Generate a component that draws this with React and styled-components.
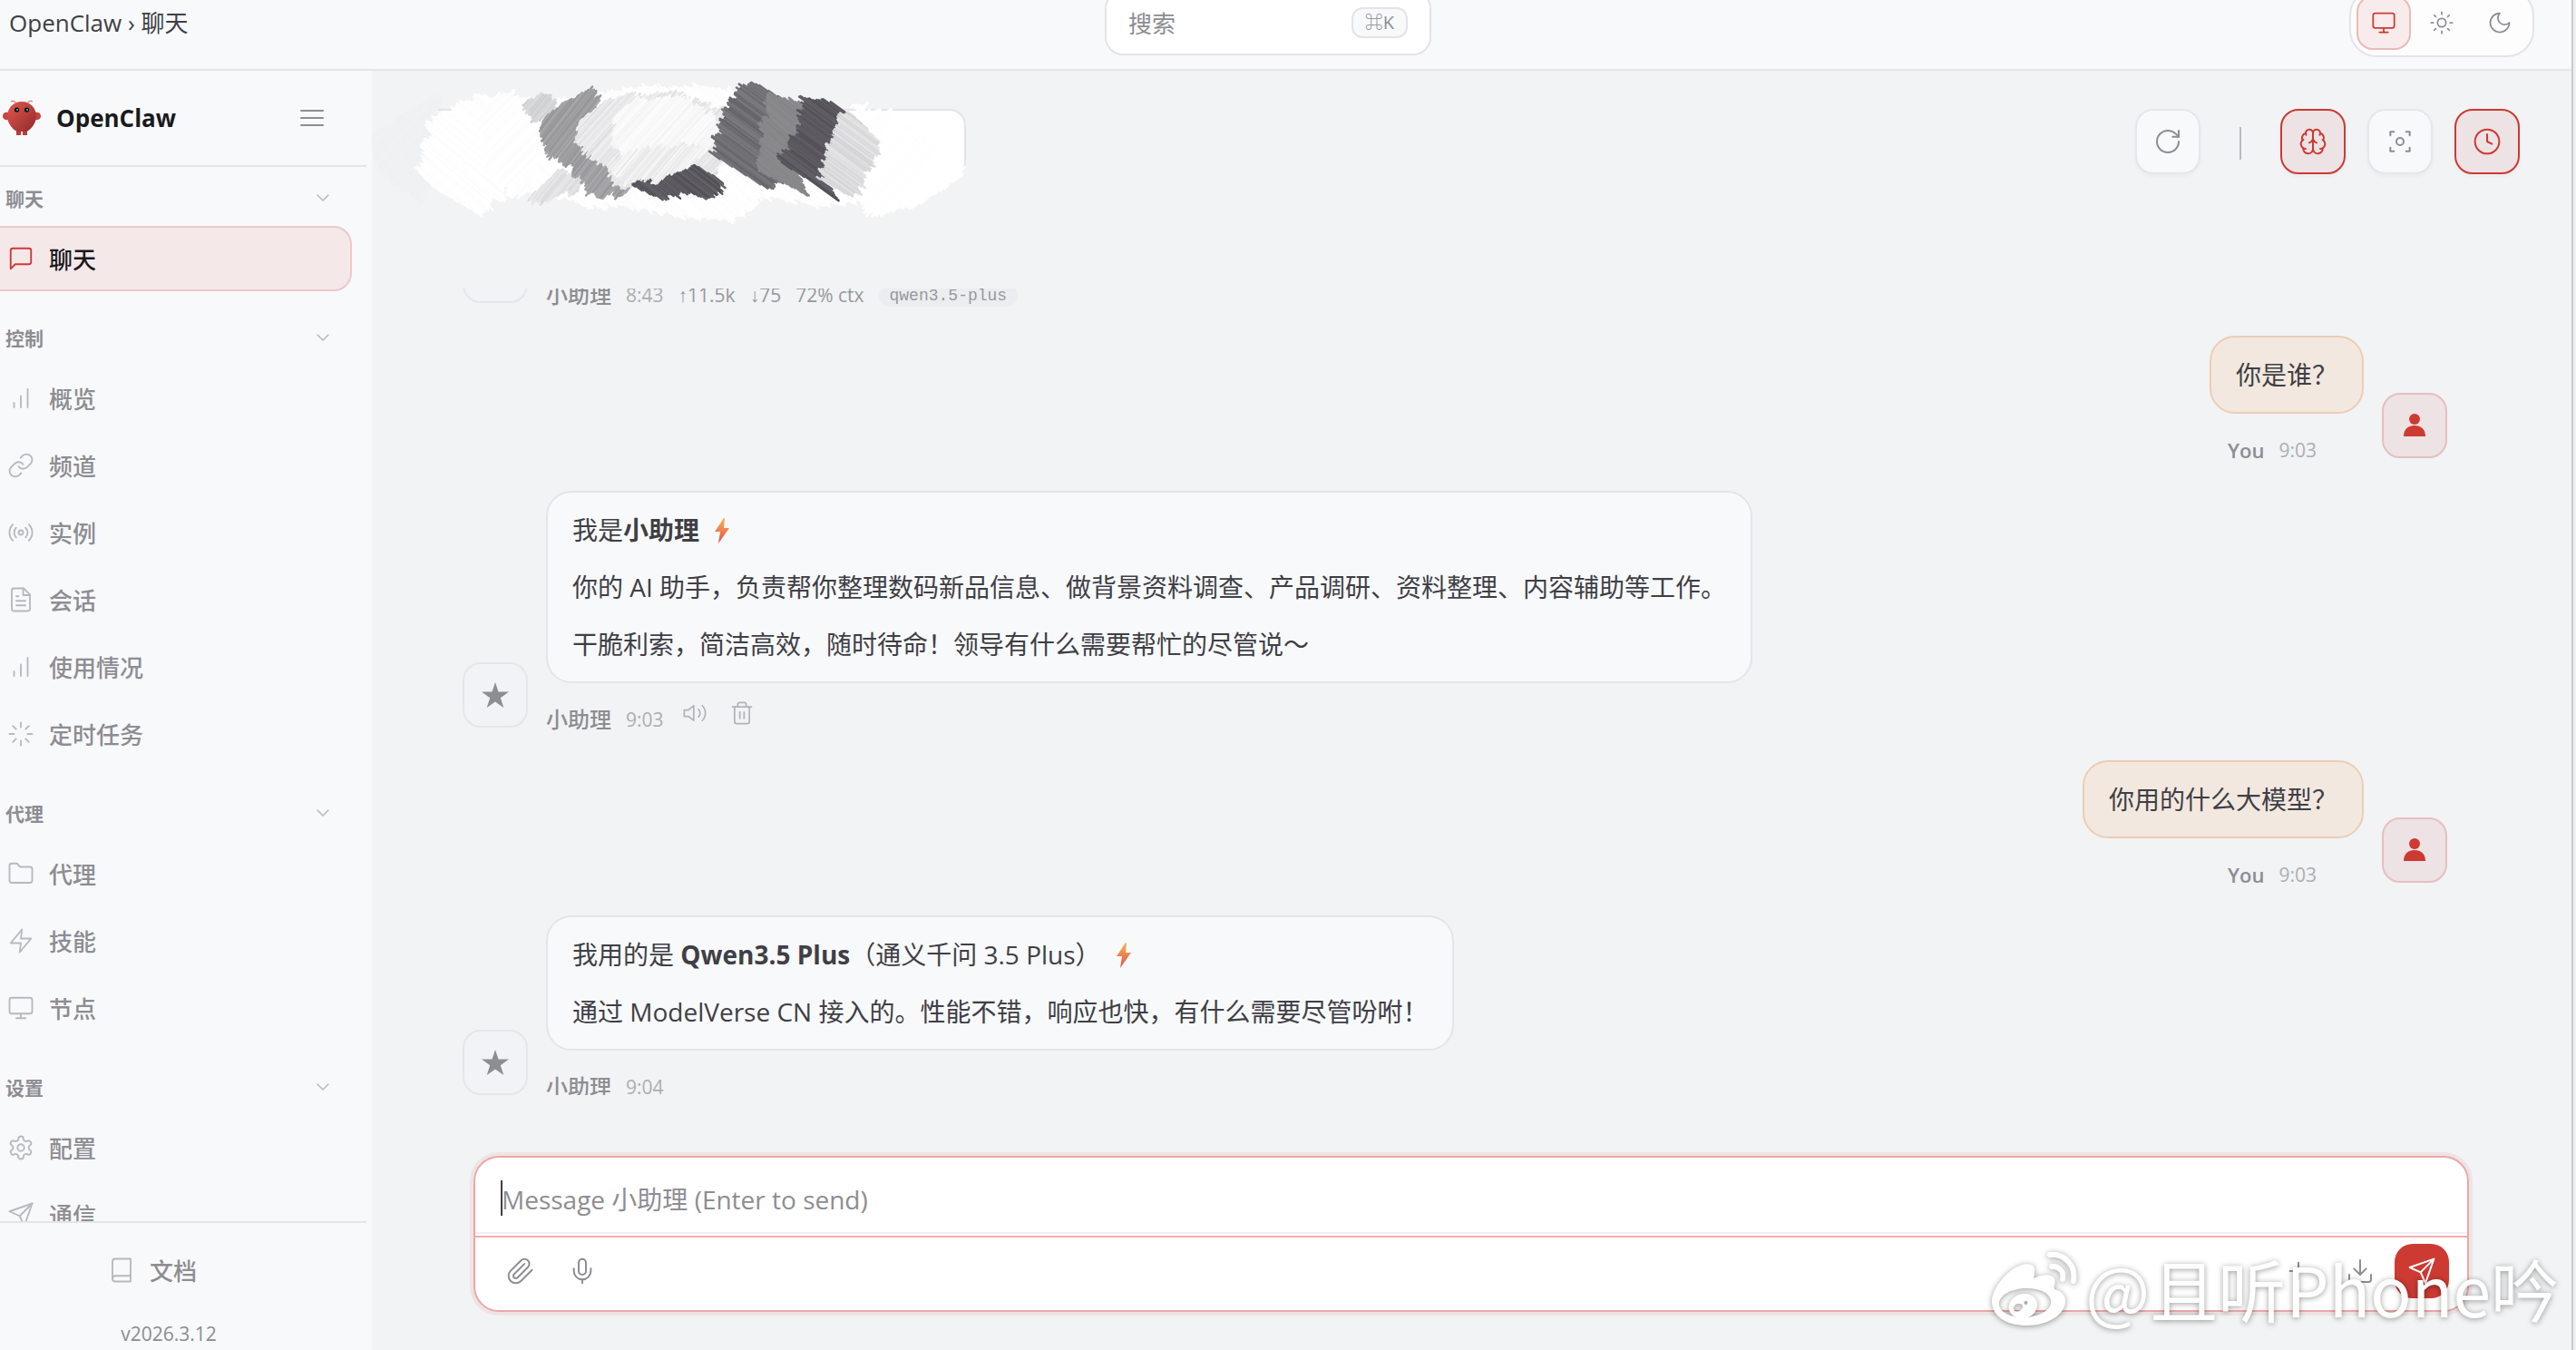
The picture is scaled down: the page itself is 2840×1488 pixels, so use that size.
import React, { Component } from 'react';
import styled, { createGlobalStyle } from 'styled-components';

const sans = `'Open Sans', 'Noto Sans CJK SC', sans-serif`;

// Stroke icons, all on a 24 unit grid
const ICONS = {
    menu: ['M3 6h18', 'M3 12h18', 'M3 18h18'],
    chevron: ['m6 9 6 6 6-6'],
    message: ['M21 15a2 2 0 0 1-2 2H7l-4 4V5a2 2 0 0 1 2-2h14a2 2 0 0 1 2 2z'],
    bars: ['M12 20V10', 'M18 20V4', 'M6 20v-4'],
    link: [
        'M10 13a5 5 0 0 0 7.54.54l3-3a5 5 0 0 0-7.07-7.07l-1.72 1.71',
        'M14 11a5 5 0 0 0-7.54-.54l-3 3a5 5 0 0 0 7.07 7.07l1.71-1.71'
    ],
    radio: [
        'M4.9 19.1C1 15.2 1 8.8 4.9 4.9',
        'M7.8 16.2c-2.3-2.3-2.3-6.1 0-8.5',
        'M14 12a2 2 0 1 1-4 0 2 2 0 0 1 4 0Z',
        'M16.2 7.8c2.3 2.3 2.3 6.1 0 8.5',
        'M19.1 4.9C23 8.8 23 15.1 19.1 19'
    ],
    file: [
        'M14.5 2H6a2 2 0 0 0-2 2v16a2 2 0 0 0 2 2h12a2 2 0 0 0 2-2V7.5L14.5 2z',
        'M14 2v6h6',
        'M16 13H8',
        'M16 17H8',
        'M10 9H8'
    ],
    loader: [
        'M12 2v4',
        'M12 18v4',
        'm4.93 4.93 2.83 2.83',
        'm16.24 16.24 2.83 2.83',
        'M2 12h4',
        'M18 12h4',
        'm4.93 19.07 2.83-2.83',
        'm16.24 7.76 2.83-2.83'
    ],
    folder: ['M20 20a2 2 0 0 0 2-2V8a2 2 0 0 0-2-2h-7.9a2 2 0 0 1-1.69-.9L9.6 3.9A2 2 0 0 0 7.93 3H4a2 2 0 0 0-2 2v13a2 2 0 0 0 2 2Z'],
    zap: ['M13 2 3 14h9l-1 8 10-12h-9l1-8z'],
    monitor: ['M4 3h16a2 2 0 0 1 2 2v10a2 2 0 0 1-2 2H4a2 2 0 0 1-2-2V5a2 2 0 0 1 2-2Z', 'M8 21h8', 'M12 17v4'],
    settings: [
        'M12.22 2h-.44a2 2 0 0 0-2 2v.18a2 2 0 0 1-1 1.73l-.43.25a2 2 0 0 1-2 0l-.15-.08a2 2 0 0 0-2.73.73l-.22.38a2 2 0 0 0 .73 2.73l.15.1a2 2 0 0 1 1 1.72v.51a2 2 0 0 1-1 1.74l-.15.09a2 2 0 0 0-.73 2.73l.22.38a2 2 0 0 0 2.73.73l.15-.08a2 2 0 0 1 2 0l.43.25a2 2 0 0 1 1 1.73V20a2 2 0 0 0 2 2h.44a2 2 0 0 0 2-2v-.18a2 2 0 0 1 1-1.73l.43-.25a2 2 0 0 1 2 0l.15.08a2 2 0 0 0 2.73-.73l.22-.39a2 2 0 0 0-.73-2.73l-.15-.08a2 2 0 0 1-1-1.74v-.5a2 2 0 0 1 1-1.74l.15-.09a2 2 0 0 0 .73-2.73l-.22-.38a2 2 0 0 0-2.73-.73l-.15.08a2 2 0 0 1-2 0l-.43-.25a2 2 0 0 1-1-1.73V4a2 2 0 0 0-2-2z',
        'M15 12a3 3 0 1 1-6 0 3 3 0 0 1 6 0Z'
    ],
    send: ['m22 2-7 20-4-9-9-4Z', 'M22 2 11 13'],
    book: ['M4 19.5A2.5 2.5 0 0 1 6.5 17H20', 'M6.5 2H20v20H6.5A2.5 2.5 0 0 1 4 19.5v-15A2.5 2.5 0 0 1 6.5 2z'],
    refresh: ['M21 12a9 9 0 1 1-9-9c2.52 0 4.93 1 6.74 2.74L21 8', 'M21 3v5h-5'],
    brain: [
        'M12 5a3 3 0 1 0-5.997.125 4 4 0 0 0-2.526 5.77 4 4 0 0 0 .556 6.588A4 4 0 1 0 12 18Z',
        'M12 5a3 3 0 1 1 5.997.125 4 4 0 0 1 2.526 5.77 4 4 0 0 1-.556 6.588A4 4 0 1 1 12 18Z',
        'M15 13a4.5 4.5 0 0 1-3-4 4.5 4.5 0 0 1-3 4',
        'M17.599 6.5a3 3 0 0 0 .399-1.375',
        'M6.003 5.125A3 3 0 0 0 6.401 6.5',
        'M3.477 10.896a4 4 0 0 1 .585-.396',
        'M19.938 10.5a4 4 0 0 1 .585.396',
        'M6 18a4 4 0 0 1-1.967-.516',
        'M19.967 17.484A4 4 0 0 1 18 18'
    ],
    focus: ['M4 7V4h3', 'M20 7V4h-3', 'M4 17v3h3', 'M20 17v3h-3', 'M15 12a3 3 0 1 1-6 0 3 3 0 0 1 6 0Z'],
    clock: ['M22 12a10 10 0 1 1-20 0 10 10 0 0 1 20 0Z', 'M12 6v6l4 2'],
    sun: [
        'M16 12a4 4 0 1 1-8 0 4 4 0 0 1 8 0Z',
        'M12 2v2',
        'M12 20v2',
        'm4.93 4.93 1.41 1.41',
        'm17.66 17.66 1.41 1.41',
        'M2 12h2',
        'M20 12h2',
        'm6.34 17.66-1.41 1.41',
        'm19.07 4.93-1.41 1.41'
    ],
    moon: ['M12 3a6 6 0 0 0 9 9 9 9 0 1 1-9-9Z'],
    clip: ['m21.44 11.05-9.19 9.19a6 6 0 0 1-8.49-8.49l8.57-8.57A4 4 0 1 1 18 8.84l-8.59 8.57a2 2 0 0 1-2.83-2.83l8.49-8.48'],
    mic: ['M12 2a3 3 0 0 0-3 3v7a3 3 0 0 0 6 0V5a3 3 0 0 0-3-3Z', 'M19 10v2a7 7 0 0 1-14 0v-2', 'M12 19v3'],
    plus: ['M5 12h14', 'M12 5v14'],
    download: ['M21 15v4a2 2 0 0 1-2 2H5a2 2 0 0 1-2-2v-4', 'm7 10 5 5 5-5', 'M12 15V3'],
    volume: ['M11 5 6 9H2v6h4l5 4V5z', 'M15.54 8.46a5 5 0 0 1 0 7.07', 'M19.07 4.93a10 10 0 0 1 0 14.14'],
    trash: [
        'M3 6h18',
        'M19 6v14a2 2 0 0 1-2 2H7a2 2 0 0 1-2-2V6',
        'M8 6V4a2 2 0 0 1 2-2h4a2 2 0 0 1 2 2v2',
        'M10 11v6',
        'M14 11v6'
    ]
};

const Icon = ({ name, size = 30 }) => (
    <svg
        width={size}
        height={size}
        viewBox="0 0 24 24"
        fill="none"
        stroke="currentColor"
        strokeWidth="1.5"
        strokeLinecap="round"
        strokeLinejoin="round"
        aria-hidden="true"
    >
        {ICONS[name].map(d => <path key={d} d={d} />)}
    </svg>
);

const Logo = () => (
    <svg width="42" height="40" viewBox="0 0 42 40" aria-hidden="true">
        <defs>
            <linearGradient id="claw" x1="0" y1="0" x2="1" y2="1">
                <stop offset="0" stopColor="#e4574f" />
                <stop offset="1" stopColor="#8f2a2a" />
            </linearGradient>
        </defs>
        <path d="M15 4Q12 0 9 2M27 4Q30 0 33 2" fill="none" stroke="#e58a84" strokeWidth="1.5" />
        <path d="M15 32h5v7h-5zM22 32h5v7h-5z" fill="#b53e3a" />
        <path d="M8 15C3 12 0 15 0 18c0 4 5 6 8 2zM34 15c5-3 8 0 8 3 0 4-5 6-8 2z" fill="#c8443f" />
        <path d="M21 2C11 2 5 10 5 18c0 8 6 15 11 17h10c5-2 11-9 11-17C37 10 31 2 21 2z" fill="url(#claw)" />
        <circle cx="15.500" cy="11" r="2.600" fill="#0b1016" />
        <circle cx="26.500" cy="11" r="2.600" fill="#0b1016" />
        <circle cx="16" cy="11" r="1" fill="#2fd6c4" />
        <circle cx="27" cy="11" r="1" fill="#2fd6c4" />
    </svg>
);

const Star = () => (
    <svg width="30" height="28" viewBox="0 0 30 28" aria-hidden="true">
        <path d="M15 0l3.500 10.500H30l-9.200 6.700L24.300 28 15 21.400 5.700 28l3.500-10.800L0 10.500h11.500z" fill="#8d8d92" />
    </svg>
);

const Person = () => (
    <svg width="26" height="28" viewBox="0 0 26 28" aria-hidden="true">
        <circle cx="13" cy="7" r="6" fill="#cc3a32" />
        <path d="M1 26C1 18 6 14 13 14s12 4 12 12z" fill="#cc3a32" />
    </svg>
);

const Bolt = () => (
    <BoltSvg width="36" height="28" viewBox="0 0 36 28" aria-hidden="true">
        <defs>
            <linearGradient id="bolt" x1="0" y1="0" x2="0" y2="1">
                <stop offset="0" stopColor="#f6b24f" />
                <stop offset="1" stopColor="#e64f50" />
            </linearGradient>
        </defs>
        <path d="M20 0 10 15h6l-2 13 12-17h-6l1-11z" fill="url(#bolt)" />
    </BoltSvg>
);

// Marker strokes that cover the session name
const PATCHES = [
    { tone: [239, 241, 243], spread: 1, angle: -50, pts: [[0, 78], [45, 50], [75, 35], [70, 100], [58, 155], [30, 135], [5, 110]] },
    { tone: [254, 254, 254], spread: 2, angle: 40, pts: [[66, 62], [125, 36], [180, 55], [205, 90], [205, 135], [160, 130], [118, 166], [70, 138], [52, 120]] },
    { tone: [254, 254, 254], spread: 2, angle: -45, pts: [[120, 56], [140, 32], [185, 40], [215, 38], [210, 110], [160, 150], [130, 110]] },
    { tone: [254, 254, 254], spread: 2, angle: 45, pts: [[200, 40], [285, 28], [335, 26], [395, 26], [400, 120], [430, 150], [395, 173], [330, 165], [240, 155], [175, 142]] },
    { tone: [254, 254, 254], spread: 2, angle: 40, pts: [[395, 110], [520, 90], [560, 110], [550, 150], [500, 155], [450, 150], [395, 140]] },
    { tone: [255, 255, 255], spread: 1, angle: -50, pts: [[530, 45], [570, 58], [655, 110], [650, 125], [600, 155], [550, 168], [532, 145], [545, 100]] },
    { tone: [212, 213, 215], spread: 8, angle: -50, pts: [[165, 46], [190, 32], [204, 40], [196, 58], [180, 60]] },
    { tone: [226, 226, 228], spread: 8, angle: -50, pts: [[172, 150], [205, 118], [236, 122], [228, 140], [182, 154]] },
    { tone: [160, 160, 163], spread: 12, angle: -52, pts: [[240, 31], [253, 38], [235, 66], [230, 92], [256, 112], [288, 132], [278, 146], [240, 142], [214, 112], [190, 96], [181, 80], [192, 58]] },
    { tone: [232, 232, 234], spread: 10, angle: -48, pts: [[228, 64], [262, 38], [330, 34], [355, 38], [388, 58], [386, 106], [372, 134], [310, 130], [278, 136], [250, 110], [228, 90]] },
    { tone: [248, 248, 249], spread: 5, angle: -48, pts: [[266, 60], [290, 40], [340, 38], [376, 62], [384, 84], [350, 108], [300, 112], [270, 96]] },
    { tone: [92, 90, 96], spread: 12, angle: 38, pts: [[284, 132], [312, 120], [355, 110], [386, 130], [372, 150], [348, 144], [312, 147]] },
    { tone: [240, 240, 241], spread: 10, angle: -50, pts: [[258, 112], [290, 95], [375, 90], [346, 116], [330, 120], [312, 134], [300, 124], [280, 134]] },
    { tone: [112, 112, 116], spread: 12, angle: 36, pts: [[398, 24], [426, 24], [472, 48], [478, 90], [462, 130], [436, 138], [378, 102], [382, 76], [394, 44]] },
    { tone: [136, 136, 139], spread: 4, angle: 40, pts: [[440, 34], [480, 44], [476, 80], [462, 100], [480, 145], [456, 134], [428, 120], [432, 70]] },
    { tone: [91, 89, 95], spread: 8, angle: 36, pts: [[478, 40], [504, 40], [540, 66], [514, 68], [506, 96], [498, 126], [518, 154], [484, 130], [450, 108], [466, 86], [474, 60]] },
    { tone: [220, 220, 222], spread: 10, angle: 36, pts: [[516, 58], [530, 56], [560, 86], [548, 114], [532, 148], [496, 130], [502, 100], [510, 80]] }
];

function hatch({ pts, angle, tone, spread }, seed) {
    let state = seed * 7919 + 17;
    const rand = () => {
        state = (state * 16807) % 2147483647;
        return state / 2147483647;
    };
    const a = (angle * Math.PI) / 180;
    const cos = Math.cos(a);
    const sin = Math.sin(a);
    const turned = pts.map(([x, y]) => [x * cos + y * sin, y * cos - x * sin]);
    const ys = turned.map(p => p[1]);
    const lines = [];
    let wave = 0;

    for (let y = Math.min(...ys) + 1; y < Math.max(...ys); y += 1.2) {
        const hits = [];
        turned.forEach(([x1, y1], i) => {
            const [x2, y2] = turned[(i + 1) % turned.length];
            if ((y1 <= y) !== (y2 <= y)) hits.push(x1 + ((y - y1) * (x2 - x1)) / (y2 - y1));
        });
        hits.sort((m, n) => m - n);
        wave = wave * 0.7 + (rand() - 0.5) * 7;
        for (let i = 0; i + 1 < hits.length; i += 2) {
            const from = hits[i] + wave + rand() * 6 - 3;
            const to = hits[i + 1] + wave + rand() * 6 - 3;
            const shift = (rand() - 0.5) * spread * 2;
            const color = tone.map(c => Math.max(0, Math.min(255, Math.round(c + shift))));
            lines.push({
                x1: from * cos - y * sin,
                y1: from * sin + y * cos,
                x2: to * cos - y * sin,
                y2: to * sin + y * cos,
                stroke: `rgb(${color.join(',')})`
            });
        }
    }
    return lines;
}

const Scribble = () => (
    <ScribbleSvg width="670" height="180" viewBox="0 0 670 180" aria-hidden="true">
        {PATCHES.map((patch, i) => (
            <g key={i} strokeWidth="2.500" strokeLinecap="round">
                {hatch(patch, i + 1).map((line, n) => <line key={n} {...line} />)}
            </g>
        ))}
    </ScribbleSvg>
);

const NAV = [
    { title: '聊天', items: [{ icon: 'message', label: '聊天', active: true }] },
    {
        title: '控制',
        items: [
            { icon: 'bars', label: '概览' },
            { icon: 'link', label: '频道' },
            { icon: 'radio', label: '实例' },
            { icon: 'file', label: '会话' },
            { icon: 'bars', label: '使用情况' },
            { icon: 'loader', label: '定时任务' }
        ]
    },
    {
        title: '代理',
        items: [
            { icon: 'folder', label: '代理' },
            { icon: 'zap', label: '技能' },
            { icon: 'monitor', label: '节点' }
        ]
    },
    {
        title: '设置',
        items: [
            { icon: 'settings', label: '配置' },
            { icon: 'send', label: '通信' }
        ]
    }
];

const UserMessage = ({ children, time }) => (
    <Group $user>
        <Stack $user>
            <Bubble $user><p>{children}</p></Bubble>
            <Meta $user>
                <Sender $user>You</Sender>
                <Time>{time}</Time>
            </Meta>
        </Stack>
        <Avatar $user><Person /></Avatar>
    </Group>
);

const AssistantMessage = ({ children, time, actions, usage }) => (
    <Group>
        <Avatar><Star /></Avatar>
        <Stack>
            {children && <Bubble>{children}</Bubble>}
            <Meta>
                <Sender>小助理</Sender>
                <Time>{time}</Time>
                {usage}
                {actions && (
                    <MetaActions>
                        <PlainButton aria-label="朗读"><Icon name="volume" size={28} /></PlainButton>
                        <PlainButton aria-label="删除"><Icon name="trash" size={28} /></PlainButton>
                    </MetaActions>
                )}
            </Meta>
        </Stack>
    </Group>
);

class App extends Component {
    constructor(props) {
        super(props);
        this.state = { draft: '' };
    }

    render() {
        const { draft } = this.state;

        return (
            <Page>
                <GlobalStyle />
                <Topbar>
                    <Breadcrumb>OpenClaw › 聊天</Breadcrumb>
                    <SearchButton>
                        <span>搜索</span>
                        <kbd>⌘K</kbd>
                    </SearchButton>
                    <ThemeSwitch>
                        <ThemeButton $active aria-label="系统"><Icon name="monitor" size={28} /></ThemeButton>
                        <ThemeButton aria-label="浅色"><Icon name="sun" size={28} /></ThemeButton>
                        <ThemeButton aria-label="深色"><Icon name="moon" size={28} /></ThemeButton>
                    </ThemeSwitch>
                </Topbar>

                <Body>
                    <Sidebar>
                        <Brand>
                            <Logo />
                            <h1>OpenClaw</h1>
                            <PlainButton aria-label="菜单"><Icon name="menu" size={32} /></PlainButton>
                        </Brand>
                        <Nav>
                            {NAV.map(section => (
                                <Section key={section.title}>
                                    <SectionHeader>
                                        <span>{section.title}</span>
                                        <Icon name="chevron" size={24} />
                                    </SectionHeader>
                                    {section.items.map(item => (
                                        <NavItem key={item.label} href="#" $active={item.active}>
                                            <Icon name={item.icon} />
                                            <span>{item.label}</span>
                                        </NavItem>
                                    ))}
                                </Section>
                            ))}
                        </Nav>
                        <SidebarFooter>
                            <DocsLink href="#">
                                <Icon name="book" />
                                <span>文档</span>
                            </DocsLink>
                            <Version>v2026.3.12</Version>
                        </SidebarFooter>
                    </Sidebar>

                    <Chat>
                        <ChatHeader>
                            <SessionBox>
                                <Scribble />
                            </SessionBox>
                            <Tools>
                                <ToolButton aria-label="刷新"><Icon name="refresh" size={32} /></ToolButton>
                                <ToolDivider />
                                <ToolButton $active aria-label="思考"><Icon name="brain" size={32} /></ToolButton>
                                <ToolButton aria-label="专注"><Icon name="focus" size={32} /></ToolButton>
                                <ToolButton $active aria-label="历史"><Icon name="clock" size={32} /></ToolButton>
                            </Tools>
                        </ChatHeader>

                        <Thread>
                            <AssistantMessage
                                time="8:43"
                                usage={
                                    <Usage>
                                        <span>↑11.5k</span>
                                        <span>↓75</span>
                                        <span>72% ctx</span>
                                        <code>qwen3.5-plus</code>
                                    </Usage>
                                }
                            />
                            <UserMessage time="9:03">你是谁？</UserMessage>
                            <AssistantMessage time="9:03" actions>
                                <p>我是<strong>小助理</strong> <Bolt /></p>
                                <p>你的 AI 助手，负责帮你整理数码新品信息、做背景资料调查、产品调研、资料整理、内容辅助等工作。</p>
                                <p>干脆利索，简洁高效，随时待命！领导有什么需要帮忙的尽管说～</p>
                            </AssistantMessage>
                            <UserMessage time="9:03">你用的什么大模型？</UserMessage>
                            <AssistantMessage time="9:04">
                                <p>我用的是 <strong>Qwen3.5 Plus</strong>（通义千问 3.5 Plus） <Bolt /></p>
                                <p>通过 ModelVerse CN 接入的。性能不错，响应也快，有什么需要尽管吩咐！</p>
                            </AssistantMessage>
                        </Thread>

                        <Composer>
                            <InputRow>
                                <Caret />
                                <MessageInput
                                    aria-label="Message"
                                    rows={1}
                                    placeholder="Message 小助理 (Enter to send)"
                                    value={draft}
                                    onChange={e => this.setState({ draft: e.target.value })}
                                />
                            </InputRow>
                            <ComposerBar>
                                <ComposerGroup>
                                    <PlainButton aria-label="附件"><Icon name="clip" size={32} /></PlainButton>
                                    <PlainButton aria-label="语音"><Icon name="mic" size={32} /></PlainButton>
                                </ComposerGroup>
                                <ComposerGroup>
                                    <PlainButton aria-label="新建"><Icon name="plus" size={32} /></PlainButton>
                                    <PlainButton aria-label="导出"><Icon name="download" size={32} /></PlainButton>
                                    <SendButton aria-label="发送"><Icon name="send" size={32} /></SendButton>
                                </ComposerGroup>
                            </ComposerBar>
                        </Composer>
                    </Chat>
                </Body>

                <Watermark>
                    <svg width="98" height="84" viewBox="0 0 98 84" aria-hidden="true">
                        <path
                            fillRule="evenodd"
                            d="M45 16c5 3 3 10 2 15 8-4 20-6 23 0 2 4-1 9 0 12 8 2 13 7 12 15-2 14-20 25-42 25C17 83 1 73 1 56 1 40 26 10 45 16zM40 42C22 42 8 50 9 60c1 9 14 15 31 14 17-2 28-10 26-19-2-8-12-13-26-13z"
                            fill="#fff"
                        />
                        <path
                            fillRule="evenodd"
                            d="M35 48c10-1 17 5 16 13-1 9-9 15-18 14-10-1-15-8-13-15 2-7 8-11 15-12zM30 59c-4 0-7 6-4 8 4 2 10-2 9-6-1-2-3-2-5-2zM38 56a2 2 0 1 0 1 4 2 2 0 0 0-1-4z"
                            fill="#fff"
                        />
                        <path d="M65 5c16-2 29 12 26 29M67 18c8-1 14 6 12 14" fill="none" stroke="#fff" strokeWidth="6" strokeLinecap="round" />
                    </svg>
                    <span>@且听Phone吟</span>
                </Watermark>
            </Page>
        );
    }
}

const GlobalStyle = createGlobalStyle`
    * {
        box-sizing: border-box;
    }

    body {
        margin: 0;
        background: #f1f3f5;
        color: #3f3f46;
        font-family: ${sans};
        font-size: 26px;
    }

    button, textarea {
        font-family: inherit;
    }

    p, h1 {
        margin: 0;
    }

    svg {
        flex: none;
        display: block;
    }
`;

const Page = styled.div`
    position: relative;
    height: 100vh;
    display: flex;
    flex-direction: column;
    overflow: hidden;
    border-right: 3px solid #f1f1f2;
    box-shadow: inset -2px 0 #c9cacd;
`;

const Topbar = styled.header`
    flex: none;
    height: 78px;
    margin-right: 2px;
    padding: 0 41px 26px 2px;
    display: grid;
    grid-template-columns: 1fr 360px 1fr;
    align-items: center;
    align-content: center;
    background: #f8f9fb;
    border-bottom: 2px solid #e4e5e8;
`;

const Breadcrumb = styled.nav`
    padding-left: 8px;
    line-height: 36px;
`;

const SearchButton = styled.button`
    height: 72px;
    padding: 0 24px;
    display: flex;
    align-items: center;
    justify-content: space-between;
    background: #fff;
    border: 2px solid #e4e4e8;
    border-radius: 20px;
    color: #8d8d92;
    font-size: 26px;

    kbd {
        height: 34px;
        padding: 0 13px;
        background: #f8f9fb;
        border: 2px solid #e4e4e8;
        border-radius: 12px;
        font-family: inherit;
        font-size: 20px;
        line-height: 30px;
    }
`;

const ThemeSwitch = styled.div`
    justify-self: end;
    display: flex;
    gap: 4px;
    padding: 6px;
    background: #fdfdfe;
    border: 2px solid #e4e4e8;
    border-radius: 30px;
`;

const ThemeButton = styled.button`
    width: 60px;
    height: 60px;
    display: grid;
    place-items: center;
    padding: 0;
    border: 2px solid ${({ $active }) => ($active ? '#ecb9b8' : 'transparent')};
    border-radius: 18px;
    background: ${({ $active }) => ($active ? '#f8ebeb' : 'transparent')};
    color: ${({ $active }) => ($active ? '#cc3a32' : '#8d8d92')};
`;

const Body = styled.div`
    flex: 1;
    min-height: 0;
    display: flex;
`;

const Sidebar = styled.aside`
    flex: none;
    width: 410px;
    padding-right: 6px;
    display: flex;
    flex-direction: column;
    background: #f8f9fb;
`;

const Brand = styled.div`
    flex: none;
    height: 106px;
    display: flex;
    align-items: center;
    padding: 0 44px 0 3px;
    border-bottom: 2px solid #e4e5e8;

    h1 {
        flex: 1;
        padding-left: 17px;
        color: #1a1a1d;
        font-size: 26px;
        font-weight: 700;
    }
`;

const PlainButton = styled.button`
    display: grid;
    place-items: center;
    padding: 0;
    border: 0;
    background: none;
    color: #8d8d92;
`;

const Nav = styled.nav`
    flex: 1;
    min-height: 0;
    overflow: hidden;
    padding: 14px 16px 0 0;
`;

const Section = styled.section`
    display: flex;
    flex-direction: column;
    gap: 2px;
    margin-bottom: 31px;
`;

const SectionHeader = styled.div`
    height: 40px;
    margin-bottom: 9px;
    padding: 0 20px 0 6px;
    display: flex;
    align-items: center;
    justify-content: space-between;
    color: #8d8d92;
    font-size: 21px;
    font-weight: 700;

    svg {
        color: #b9b9bd;
    }
`;

const NavItem = styled.a`
    height: 72px;
    margin-left: -20px;
    padding-left: 26px;
    display: flex;
    align-items: center;
    gap: 16px;
    border: 2px solid ${({ $active }) => ($active ? '#ecc9ca' : 'transparent')};
    border-radius: 20px;
    background: ${({ $active }) => ($active ? '#f4e8e9' : 'transparent')};
    color: ${({ $active }) => ($active ? '#1a1a1d' : '#8d8d92')};
    font-weight: 500;
    text-decoration: none;

    svg {
        color: ${({ $active }) => ($active ? '#d03a35' : '#b9b9bd')};
    }
`;

const SidebarFooter = styled.footer`
    flex: none;
    height: 142px;
    padding-right: 32px;
    display: flex;
    flex-direction: column;
    align-items: center;
    border-top: 2px solid #e4e5e8;
`;

const DocsLink = styled.a`
    height: 72px;
    margin-top: 16px;
    padding-right: 36px;
    display: flex;
    align-items: center;
    gap: 16px;
    color: #8d8d92;
    font-weight: 500;
    text-decoration: none;

    svg {
        color: #b9b9bd;
    }
`;

const Version = styled.span`
    margin-top: 20px;
    color: #8d8d92;
    font-size: 21px;
    font-weight: 500;
    line-height: 28px;
`;

const Chat = styled.main`
    flex: 1;
    min-width: 0;
    display: flex;
    flex-direction: column;
    padding: 0 115px 42px 112px;
`;

const ChatHeader = styled.div`
    flex: none;
    display: flex;
    align-items: flex-start;
    justify-content: space-between;
    height: 240px;
    margin: 0 -56px 0 -55px;
    padding-top: 42px;
`;

const SessionBox = styled.div`
    position: relative;
    width: 598px;
    height: 76px;
    background: #fff;
    border: 2px solid #e4e4e8;
    border-radius: 18px;
`;

const ScribbleSvg = styled.svg`
    position: absolute;
    left: -59px;
    top: -52px;
`;

const Tools = styled.div`
    display: flex;
    align-items: center;
    gap: 24px;
`;

const ToolButton = styled.button`
    width: 72px;
    height: 72px;
    display: grid;
    place-items: center;
    padding: 0;
    border: 2px solid ${({ $active }) => ($active ? '#cc3a32' : '#e6e7eb')};
    border-radius: 20px;
    background: ${({ $active }) => ($active ? '#ede2e4' : '#f8f9fb')};
    color: ${({ $active }) => ($active ? '#cc3a32' : '#8d8d92')};
    box-shadow: 0 2px 4px rgba(0, 0, 0, 0.04);
`;

const ToolDivider = styled.span`
    width: 2px;
    height: 36px;
    margin: 4px 19px 0 19px;
    background: #b9bbc0;
`;

const Thread = styled.div`
    flex: 1;
    min-height: 0;
    display: flex;
    flex-direction: column;
    justify-content: flex-end;
    gap: 36px;
    overflow: hidden;
    margin: 0 24px 67px -12px;
`;

const Group = styled.div`
    display: flex;
    align-items: flex-end;
    justify-content: ${({ $user }) => ($user ? 'flex-end' : 'flex-start')};
    gap: 20px;
`;

const Avatar = styled.div`
    flex: none;
    width: 72px;
    height: 72px;
    display: grid;
    place-items: center;
    border: 2px solid ${({ $user }) => ($user ? '#e6bfc1' : '#e5e6e9')};
    border-radius: 20px;
    background: ${({ $user }) => ($user ? '#ede2e4' : '#f2f3f6')};
`;

const Stack = styled.div`
    display: flex;
    flex-direction: column;
    align-items: ${({ $user }) => ($user ? 'flex-end' : 'flex-start')};
`;

const Bubble = styled.div`
    display: flex;
    flex-direction: column;
    gap: 21px;
    padding: 20px 27px;
    border: 2px solid ${({ $user }) => ($user ? '#edcdb5' : '#e4e5e8')};
    border-radius: 28px;
    background: ${({ $user }) => ($user ? '#f2e8df' : '#f8f9fb')};
    font-size: 28px;
    line-height: 42px;

    strong {
        font-weight: 700;
    }
`;

const BoltSvg = styled.svg`
    display: inline-block;
    vertical-align: -4px;
`;

const Meta = styled.div`
    height: 32px;
    margin-top: 17px;
    padding-right: ${({ $user }) => ($user ? '52px' : '0')};
    display: flex;
    align-items: flex-end;
    gap: 16px;
    line-height: 18px;
`;

const Sender = styled.span`
    color: #8d8d92;
    font-size: ${({ $user }) => ($user ? '22px' : '24px')};
    font-weight: ${({ $user }) => ($user ? '600' : '500')};
`;

const Time = styled.time`
    color: #aeaeb2;
    font-size: 21px;
`;

const Usage = styled.div`
    display: flex;
    align-items: flex-end;
    gap: 16px;
    color: #98989c;
    font-family: 'Open Sans', 'Liberation Serif', sans-serif;
    font-size: 21px;

    code {
        height: 24px;
        margin-bottom: -4px;
        padding: 0 12px;
        border-radius: 12px;
        background: #ecedf0;
        font-family: 'Liberation Mono', monospace;
        font-size: 18px;
        line-height: 24px;
    }
`;

const MetaActions = styled.div`
    display: flex;
    align-self: center;
    gap: 24px;
    padding-left: 4px;

    button {
        color: #b4b4b8;
    }
`;

const Composer = styled.form`
    flex: none;
    border: 2px solid #eaa8a8;
    border-radius: 28px;
    background: #fff;
    box-shadow: 0 0 0 4px #efe3e4;
`;

const InputRow = styled.div`
    position: relative;
    height: 84px;
    padding: 0 28px;
    display: flex;
    align-items: center;
    border-bottom: 2px solid #eeeff2;
`;

const Caret = styled.span`
    position: absolute;
    left: 28px;
    top: 25px;
    width: 2px;
    height: 39px;
    background: #3f3f46;
`;

const MessageInput = styled.textarea`
    flex: 1;
    height: 40px;
    margin-top: 10px;
    padding: 0 0 0 1px;
    border: 0;
    outline: 0;
    resize: none;
    background: none;
    color: #3f3f46;
    font-size: 28px;
    line-height: 40px;

    &::placeholder {
        color: #8d8d92;
        opacity: 1;
    }
`;

const ComposerBar = styled.div`
    height: 82px;
    margin-top: 2px;
    padding: 0 20px 6px 34px;
    display: flex;
    align-items: center;
    justify-content: space-between;
    border-top: 2px solid #f4adb0;
`;

const ComposerGroup = styled.div`
    display: flex;
    align-items: center;
    gap: 36px;
`;

const SendButton = styled.button`
    width: 60px;
    height: 60px;
    margin-left: -14px;
    display: grid;
    place-items: center;
    padding: 0;
    border: 0;
    border-radius: 20px;
    background: #cc3a32;
    color: #fff;
`;

const Watermark = styled.div`
    position: absolute;
    right: 16px;
    bottom: 12px;
    display: flex;
    align-items: center;
    gap: 6px;
    color: #fff;
    font-family: 'Noto Sans CJK SC', sans-serif;
    font-size: 75px;
    line-height: 112px;
    pointer-events: none;
    filter: drop-shadow(0 1px 3px rgba(0, 0, 0, 0.4));
`;

export default App;
